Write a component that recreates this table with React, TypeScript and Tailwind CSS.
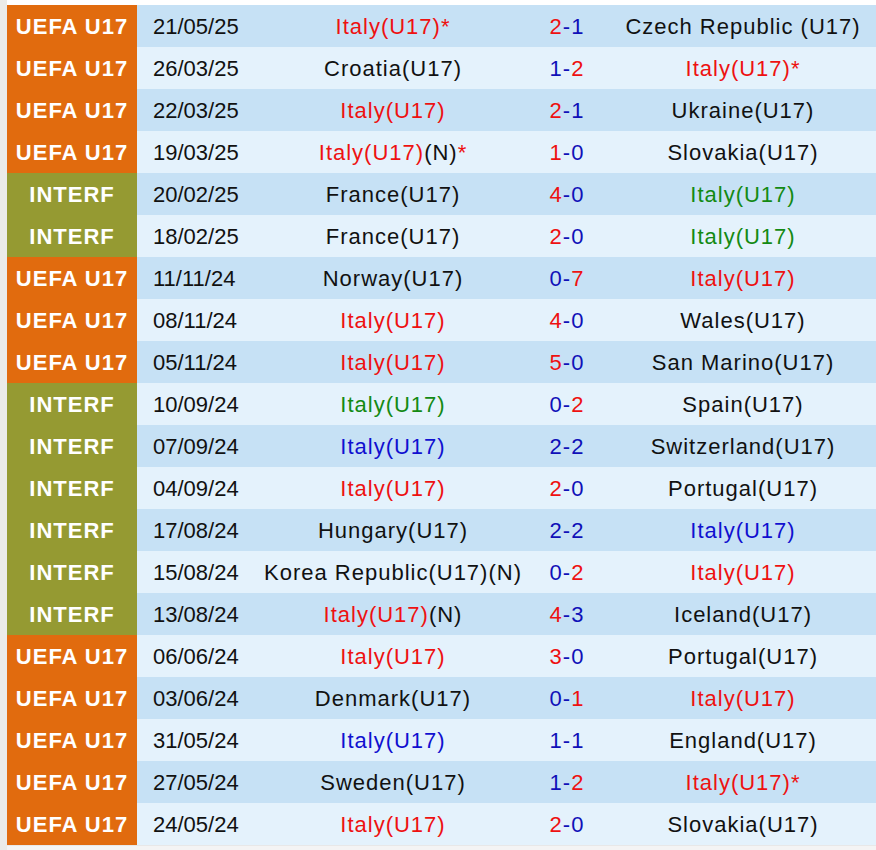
import React from "react"

type Row = {
  comp: "UEFA U17" | "INTERF"
  date: string
  home: string
  hs: number
  as: number
  away: string
  homeN?: boolean
  homeStar?: boolean
  awayStar?: boolean
}

const rows: Row[] = [
  { comp: "UEFA U17", date: "21/05/25", home: "Italy(U17)", hs: 2, as: 1, away: "Czech Republic (U17)", homeStar: true },
  { comp: "UEFA U17", date: "26/03/25", home: "Croatia(U17)", hs: 1, as: 2, away: "Italy(U17)", awayStar: true },
  { comp: "UEFA U17", date: "22/03/25", home: "Italy(U17)", hs: 2, as: 1, away: "Ukraine(U17)" },
  { comp: "UEFA U17", date: "19/03/25", home: "Italy(U17)", hs: 1, as: 0, away: "Slovakia(U17)", homeN: true, homeStar: true },
  { comp: "INTERF", date: "20/02/25", home: "France(U17)", hs: 4, as: 0, away: "Italy(U17)" },
  { comp: "INTERF", date: "18/02/25", home: "France(U17)", hs: 2, as: 0, away: "Italy(U17)" },
  { comp: "UEFA U17", date: "11/11/24", home: "Norway(U17)", hs: 0, as: 7, away: "Italy(U17)" },
  { comp: "UEFA U17", date: "08/11/24", home: "Italy(U17)", hs: 4, as: 0, away: "Wales(U17)" },
  { comp: "UEFA U17", date: "05/11/24", home: "Italy(U17)", hs: 5, as: 0, away: "San Marino(U17)" },
  { comp: "INTERF", date: "10/09/24", home: "Italy(U17)", hs: 0, as: 2, away: "Spain(U17)" },
  { comp: "INTERF", date: "07/09/24", home: "Italy(U17)", hs: 2, as: 2, away: "Switzerland(U17)" },
  { comp: "INTERF", date: "04/09/24", home: "Italy(U17)", hs: 2, as: 0, away: "Portugal(U17)" },
  { comp: "INTERF", date: "17/08/24", home: "Hungary(U17)", hs: 2, as: 2, away: "Italy(U17)" },
  { comp: "INTERF", date: "15/08/24", home: "Korea Republic(U17)", hs: 0, as: 2, away: "Italy(U17)", homeN: true },
  { comp: "INTERF", date: "13/08/24", home: "Italy(U17)", hs: 4, as: 3, away: "Iceland(U17)", homeN: true },
  { comp: "UEFA U17", date: "06/06/24", home: "Italy(U17)", hs: 3, as: 0, away: "Portugal(U17)" },
  { comp: "UEFA U17", date: "03/06/24", home: "Denmark(U17)", hs: 0, as: 1, away: "Italy(U17)" },
  { comp: "UEFA U17", date: "31/05/24", home: "Italy(U17)", hs: 1, as: 1, away: "England(U17)" },
  { comp: "UEFA U17", date: "27/05/24", home: "Sweden(U17)", hs: 1, as: 2, away: "Italy(U17)", awayStar: true },
  { comp: "UEFA U17", date: "24/05/24", home: "Italy(U17)", hs: 2, as: 0, away: "Slovakia(U17)" },
]

function teamColor(name: string, own: number, other: number) {
  if (!name.startsWith("Italy")) return "text-[#111]"
  if (own > other) return "text-[#ee1111]"
  if (own < other) return "text-[#138a13]"
  return "text-[#1010d0]"
}

function Team({ name, own, other, n, star }: { name: string; own: number; other: number; n?: boolean; star?: boolean }) {
  const c = teamColor(name, own, other)
  return (
    <span className="whitespace-nowrap">
      <span className={c}>{name}</span>
      {n && <span className="text-[#111]">(N)</span>}
      {star && <span className={c}>*</span>}
    </span>
  )
}

function Score({ hs, as }: { hs: number; as: number }) {
  const hc = hs > as ? "text-[#ee1111]" : "text-[#1010b8]"
  const ac = as > hs ? "text-[#ee1111]" : "text-[#1010b8]"
  return (
    <span>
      <span className={hc}>{hs}</span>
      <span className="text-[#1010b8]">-</span>
      <span className={ac}>{as}</span>
    </span>
  )
}

export default function App() {
  return (
    <div className="w-[876px] h-[850px] bg-white flex font-['Liberation_Sans',Arial,sans-serif] text-[22px] tracking-[1px]">
      <div className="w-[7px] bg-[#ebebe8] shrink-0" />
      <div className="flex-1 flex flex-col pt-[5px]">
        {rows.map((r, i) => {
          const bg = i % 2 === 0 ? "bg-[#c6e1f5]" : "bg-[#e4f2fc]"
          const comp = r.comp === "INTERF" ? "bg-[#959a32]" : "bg-[#e16b0e]"
          return (
            <div key={i} className="flex h-[42px] items-stretch">
              <div className={`${comp} w-[130px] shrink-0 flex items-center justify-center text-white font-bold`}>
                {r.comp}
              </div>
              <div className={`${bg} flex-1 flex items-center`}>
                <div className="w-[125px] shrink-0 pl-[16px] text-[#111] tracking-normal">{r.date}</div>
                <div className="w-[262px] shrink-0 text-center">
                  <Team name={r.home} own={r.hs} other={r.as} n={r.homeN} star={r.homeStar} />
                </div>
                <div className="w-[86px] shrink-0 text-center">
                  <Score hs={r.hs} as={r.as} />
                </div>
                <div className="flex-1 text-center">
                  <Team name={r.away} own={r.as} other={r.hs} star={r.awayStar} />
                </div>
              </div>
            </div>
          )
        })}
        <div className="flex-1 border-t border-[#e8e8e8] bg-[#f4f4f4]" />
      </div>
    </div>
  )
}
